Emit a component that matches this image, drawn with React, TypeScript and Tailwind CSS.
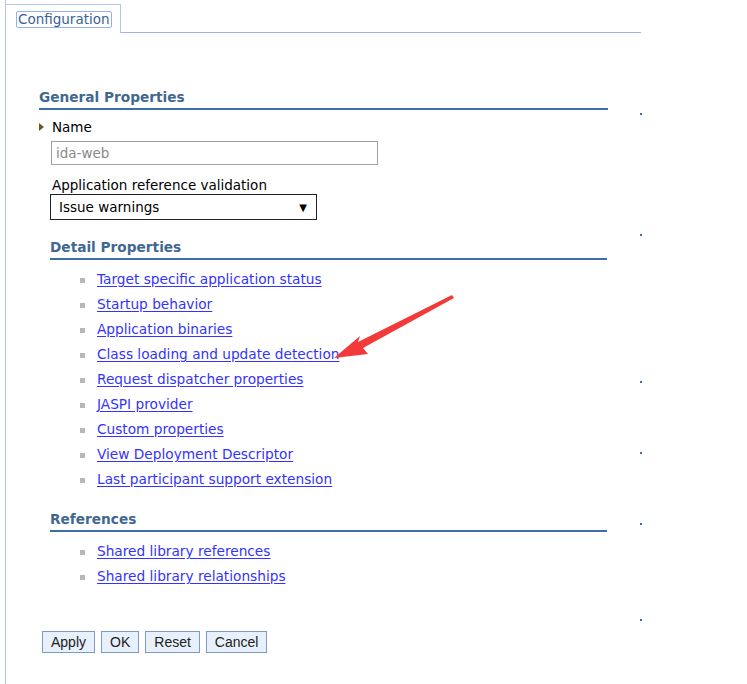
import React from "react";

const detailLinks = [
  "Target specific application status",
  "Startup behavior",
  "Application binaries",
  "Class loading and update detection",
  "Request dispatcher properties",
  "JASPI provider",
  "Custom properties",
  "View Deployment Descriptor",
  "Last participant support extension",
];

const refLinks = ["Shared library references", "Shared library relationships"];

const font = { fontFamily: '"DejaVu Sans", Verdana, sans-serif' };

function LinkList({ items }: { items: string[] }) {
  return (
    <ul className="flex flex-col gap-[6px] pl-[30px] pt-[10px]">
      {items.map((t) => (
        <li key={t} className="flex items-center h-[19px]">
          <span className="w-[5px] h-[5px] bg-[#b8b8b8] mr-[12px] mt-[2px]" />
          <a className="text-[13.7px] text-[#3333ff] underline underline-offset-[2px] cursor-pointer leading-[19px]">
            {t}
          </a>
        </li>
      ))}
    </ul>
  );
}

function Heading({ children }: { children: React.ReactNode }) {
  return (
    <div className="border-b-2 border-[#3d6fa3] text-[13.7px] font-bold text-[#416890] leading-[18px] pb-[2px]">
      {children}
    </div>
  );
}

export default function App() {
  return (
    <div className="relative w-[747px] h-[684px] bg-white overflow-hidden" style={font}>
      <div className="ml-[5px] w-[636px] h-[684px] border-l border-[#b5c8e8] pt-[4px]">
        {/* tab row */}
        <div className="flex">
          <div className="w-[115px] h-[29px] border-t border-r border-[#b5c8e8] pt-[2px] pl-[10px]">
            <span className="inline-block text-[13.5px] leading-[15px] text-[#3a6291] border border-[#8fb3ec] px-[1px] rounded-[2px]">
              Configuration
            </span>
          </div>
          <div className="flex-1 border-b border-[#9fb4e0]" />
        </div>

        {/* content */}
        <div className="pl-[33px] pt-[55px] w-[602px]">
          <Heading>General Properties</Heading>
          <div className="pt-[9px]">
            <div className="flex items-center h-[16px]">
              <span className="w-0 h-0 border-y-[4px] border-y-transparent border-l-[5px] border-l-[#6b5a1e] mr-[8px]" />
              <span className="text-[13.5px] text-black leading-[16px]">Name</span>
            </div>
            <div className="pl-[12px] pt-[6px]">
              <div className="w-[327px] h-[24px] border border-[#a0a0a0] flex items-center pl-[4px] text-[13.5px] text-[#8a8a8a]">
                ida-web
              </div>
            </div>
            <div className="pl-[13px] pt-[12px] text-[13.5px] text-black leading-[16px]">
              Application reference validation
            </div>
            <div className="pl-[11px] pt-[1px]">
              <div className="w-[267px] h-[26px] border border-[#222] flex items-center justify-between pl-[8px] pr-[9px] text-[13.5px] text-black">
                <span>Issue warnings</span>
                <span className="text-[10px]">▼</span>
              </div>
            </div>
          </div>

          <div className="pl-[11px] pt-[18px]">
            <div className="w-[557px]">
              <Heading>Detail Properties</Heading>
            </div>
            <LinkList items={detailLinks} />

            <div className="w-[557px] pt-[21px]">
              <Heading>References</Heading>
            </div>
            <LinkList items={refLinks} />
          </div>

          <div className="flex gap-[6px] pt-[45px] pl-[3px]" style={{ fontFamily: '"Liberation Sans", Arial, sans-serif' }}>
            {["Apply", "OK", "Reset", "Cancel"].map((b) => (
              <button
                key={b}
                className="h-[22px] px-[8px] bg-[#e8f0fb] border border-[#7d9cc4] text-[14px] text-[#222] leading-[20px]"
              >
                {b}
              </button>
            ))}
          </div>
        </div>
      </div>

      {/* right edge dots */}
      {[113, 234, 381, 452, 523, 619].map((y) => (
        <span key={y} className="absolute left-[640px] w-[2px] h-[2px] bg-[#3d6fa3]" style={{ top: y }} />
      ))}

      {/* red arrow annotation */}
      <svg className="absolute left-0 top-0 pointer-events-none" width="747" height="684">
        <polygon points="452,295 358,342 360,336 334,358 368,354 363,348 454,298" fill="#f23a3a" />
      </svg>
    </div>
  );
}
